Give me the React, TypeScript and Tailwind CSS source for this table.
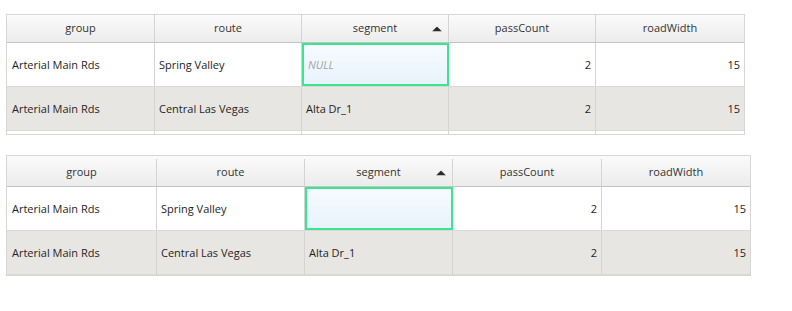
import React from "react";

type Row = { group: string; route: string; segment: string | null; passCount: number; roadWidth: number };

const rows: Row[] = [
    { group: "Arterial Main Rds", route: "Spring Valley", segment: null, passCount: 2, roadWidth: 15 },
    { group: "Arterial Main Rds", route: "Central Las Vegas", segment: "Alta Dr_1", passCount: 2, roadWidth: 15 },
];

const SortArrow = () => (
    <svg width="10" height="5" viewBox="0 0 10 5" className="absolute right-[6px] top-1/2 -translate-y-1/2">
        <path d="M0 5 L5 0 L10 5 Z" fill="#2b2b2b" />
    </svg>
);

// one grid per table; cols are pixel widths
const Grid: React.FC<{ cols: string; head: string; showNull: boolean; tail: boolean }> = ({ cols, head, showNull, tail }) => {
    return (
        <div className="border border-[#d6d6d6] bg-white text-[11px] text-[#1e1e1e]" style={{ width: "fit-content" }}>
            {/* header */}
            <div className={`grid ${cols} ${head} border-b border-[#c4c4c4] bg-gradient-to-b from-[#fbfbfb] to-[#ececec] text-[#333]`}>
                <div className="flex items-center justify-center border-r border-[#d4d4d4]">group</div>
                <div className="flex items-center justify-center border-r border-[#d4d4d4]">route</div>
                <div className="relative flex items-center justify-center border-r border-[#d4d4d4]">
                    segment
                    <SortArrow />
                </div>
                <div className="flex items-center justify-center border-r border-[#d4d4d4]">passCount</div>
                <div className="flex items-center justify-center">roadWidth</div>
            </div>
            {rows.map((r, i) => (
                <div key={i} className={`grid ${cols} h-[44px] border-b border-[#d9d9d9] ${i === 1 ? "bg-[#e8e6e3]" : "bg-white"}`}>
                    <div className="flex items-center pl-[5px] pt-[2px] border-r border-[#d4d4d4]">{r.group}</div>
                    <div className="flex items-center pl-[4px] pt-[2px] border-r border-[#d4d4d4]">{r.route}</div>
                    {r.segment === null ? (
                        <div className="flex items-center pl-[4px] pt-[2px] border-2 border-[#3ae58f] bg-gradient-to-b from-[#f6fbff] to-[#e8f3fd] text-[#a3a3a3] italic">
                            {showNull ? "NULL" : ""}
                        </div>
                    ) : (
                        <div className="flex items-center pl-[4px] pt-[2px] border-r border-[#d4d4d4]">{r.segment}</div>
                    )}
                    <div className="flex items-center justify-end pr-[4px] pt-[2px] border-r border-[#d4d4d4]">{r.passCount}</div>
                    <div className="flex items-center justify-end pr-[4px] pt-[2px]">{r.roadWidth}</div>
                </div>
            ))}
            {tail && (
                <div className={`grid ${cols} h-[3px] bg-white`}>
                    <div className="border-r border-[#d4d4d4]" />
                    <div className="border-r border-[#d4d4d4]" />
                    <div className="border-r border-[#d4d4d4]" />
                    <div className="border-r border-[#d4d4d4]" />
                    <div />
                </div>
            )}
        </div>
    );
};

export default function App() {
    return (
        <div className="h-[311px] w-[792px] bg-white pl-[6px] pt-[14px]" style={{ fontFamily: '"Open Sans", "Noto Sans", sans-serif' }}>
            <Grid cols="grid-cols-[148px_147px_147px_147px_148px]" head="h-[28px]" showNull={true} tail={true} />
            <div className="h-[20px]" />
            <Grid cols="grid-cols-[150px_148px_148px_149px_148px]" head="h-[31px] pt-[3px]" showNull={false} tail={false} />
        </div>
    );
}
